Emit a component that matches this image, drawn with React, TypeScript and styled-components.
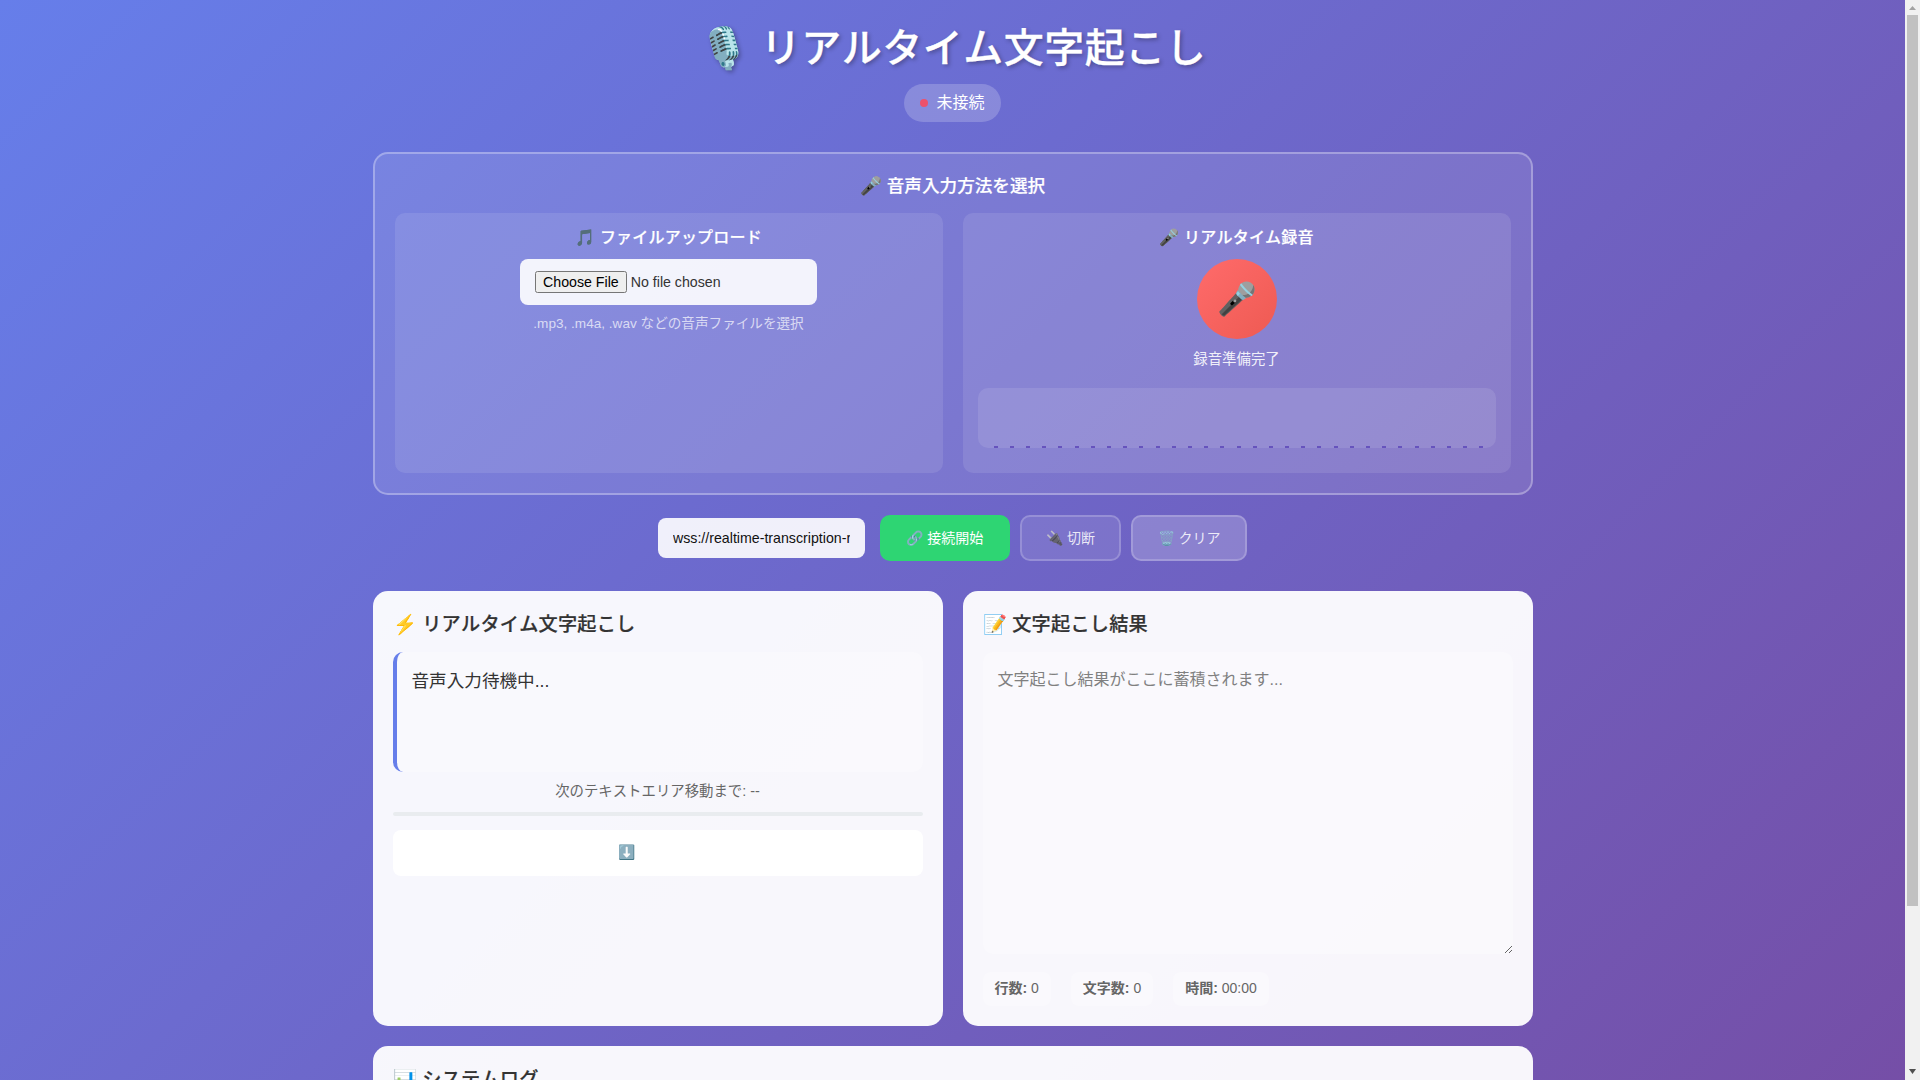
import React from "react";
import styled, { createGlobalStyle } from "styled-components";

const Global = createGlobalStyle`
  * { margin: 0; padding: 0; box-sizing: border-box; }
  body {
    font-family: "Liberation Sans", "Noto Sans CJK JP", sans-serif;
    font-kerning: none;
    line-height: 1.35;
    background: linear-gradient(135deg, #667eea 0%, #764ba2 100%);
    min-height: 100vh;
    padding-right: 15px;
    color: #333;
  }
`;

const ScrollRail = styled.div`
  position: fixed;
  top: 0;
  right: 0;
  width: 15px;
  height: 100vh;
  background: #f1f1f1;
  display: flex;
  flex-direction: column;
  z-index: 10;
`;

const ScrollArrow = styled.svg`
  display: block;
  flex: none;
  width: 15px;
  height: 15px;
`;

const ScrollTrack = styled.div`
  flex: 1;
  padding: 0 2px;
`;

const ScrollThumb = styled.div`
  height: 891px;
  background: #c1c1c1;
`;

const Container = styled.div`
  max-width: 1200px;
  margin: 0 auto;
  padding: 20px;
`;

const Header = styled.header`
  text-align: center;
  margin-bottom: 30px;
`;

const Title = styled.h1`
  font-size: 40px;
  font-weight: 500;
  line-height: 56px;
  letter-spacing: 0.5px;
  color: #fff;
  margin-bottom: 8px;
  -webkit-text-stroke: 0.3px #fff;
  text-shadow: 2px 2px 4px rgba(0, 0, 0, 0.3);
`;

const Status = styled.div`
  display: inline-flex;
  align-items: center;
  padding: 8px 16px;
  border-radius: 20px;
  background: rgba(255, 255, 255, 0.2);
  color: #fff;
  font-size: 16px;
`;

const Dot = styled.span`
  width: 8px;
  height: 8px;
  border-radius: 50%;
  background: #ff4757;
  opacity: 0.85;
  margin-right: 8px;
`;

const InputPanel = styled.section`
  background: rgba(255, 255, 255, 0.1);
  border: 2px solid rgba(255, 255, 255, 0.3);
  border-radius: 15px;
  padding: 20px;
  margin-bottom: 20px;
`;

const PanelTitle = styled.h3`
  color: #fff;
  font-size: 17.6px;
  font-weight: 500;
  line-height: 25.76px;
  -webkit-text-stroke: 0.2px #fff;
  text-align: center;
  margin-bottom: 14px;
`;

const MethodGrid = styled.div`
  display: grid;
  grid-template-columns: 1fr 1fr;
  gap: 20px;
`;

const Method = styled.div`
  background: rgba(255, 255, 255, 0.1);
  border-radius: 10px;
  padding: 14px 15px 15px;
  text-align: center;
  display: flex;
  flex-direction: column;
  align-items: center;
`;

const MethodTitle = styled.h4`
  color: #fff;
  font-size: 16px;
  font-weight: 500;
  letter-spacing: 0.2px;
  -webkit-text-stroke: 0.2px #fff;
  margin-bottom: 10px;
`;

const FileInput = styled.input`
  background: rgba(255, 255, 255, 0.9);
  border: none;
  border-radius: 8px;
  padding: 12px 15px;
  width: 297px;
  font-size: 14.2px;
  font-family: inherit;
  color: #333;
`;

const Hint = styled.p`
  color: rgba(255, 255, 255, 0.7);
  font-size: 13.6px;
  margin-top: 10px;
`;

const RecordButton = styled.button`
  width: 80px;
  height: 80px;
  border: none;
  border-radius: 50%;
  background: linear-gradient(135deg, #ff6b6b, #ee5a52);
  font-size: 32px;
  font-family: inherit;
`;

const RecordStatus = styled.div`
  color: rgba(255, 255, 255, 0.9);
  font-size: 14.4px;
  margin-top: 11px;
`;

const Visualizer = styled.div`
  width: 100%;
  height: 60px;
  margin: 19px 0 10px;
  border-radius: 10px;
  overflow: hidden;
  background: rgba(255, 255, 255, 0.1);
  display: flex;
  align-items: flex-end;
  gap: 12.2px;
`;

const Bar = styled.span`
  width: 4px;
  height: 2px;
  flex: none;
  background: #6653bd;
`;

const Controls = styled.div`
  display: flex;
  justify-content: center;
  align-items: center;
  gap: 10px;
  margin-bottom: 30px;
`;

const UrlInput = styled.input`
  width: 207px;
  padding: 12px 15px;
  margin-right: 5px;
  border: none;
  border-radius: 8px;
  background: rgba(255, 255, 255, 0.9);
  color: #111;
  font-size: 14.2px;
  font-family: inherit;
`;

const Button = styled.button<{ $variant: "primary" | "muted" | "soft" }>`
  height: 46px;
  padding: 0 24.4px 3px;
  border-radius: 10px;
  font-size: 14px;
  font-family: inherit;
  color: ${(p) => (p.$variant === "primary" ? "#fff" : "rgba(255,255,255,0.85)")};
  border: 2px solid
    ${(p) => (p.$variant === "primary" ? "#2ed573" : "rgba(255,255,255,0.2)")};
  background: ${(p) =>
    p.$variant === "primary"
      ? "#2ed573"
      : p.$variant === "soft"
        ? "rgba(255,255,255,0.2)"
        : "rgba(255,255,255,0.1)"};
`;

const CardGrid = styled.div`
  display: grid;
  grid-template-columns: 1fr 1fr;
  gap: 20px;
  margin-bottom: 20px;
`;

const Card = styled.section`
  background: rgba(255, 255, 255, 0.95);
  border-radius: 15px;
  padding: 20px;
`;

const CardTitle = styled.h2`
  color: #333;
  font-size: 19.2px;
  font-weight: 500;
  line-height: 28px;
  letter-spacing: 0.2px;
  -webkit-text-stroke: 0.2px #333;
  margin-bottom: 13px;
`;

const LiveBox = styled.div`
  height: 120px;
  padding: 15px;
  border-left: 4px solid #667eea;
  border-radius: 10px;
  background: rgba(255, 255, 255, 0.3);
  color: #333;
  font-size: 17.6px;
  line-height: 1.6;
`;

const Timer = styled.div`
  margin-top: 10px;
  text-align: center;
  color: #666;
  font-size: 14.4px;
`;

const Progress = styled.div`
  height: 4px;
  margin-top: 10px;
  border-radius: 2px;
  background: #e9ecef;
`;

const DownloadRow = styled.div`
  height: 46px;
  margin-top: 14px;
  padding-right: 62px;
  border-radius: 8px;
  background: #fff;
  display: flex;
  align-items: center;
  justify-content: center;
  font-size: 14px;
`;

const ResultArea = styled.textarea`
  display: block;
  width: 100%;
  height: 302px;
  padding: 15px;
  border: none;
  border-radius: 10px;
  background: rgba(255, 255, 255, 0.3);
  font-size: 16px;
  font-family: inherit;
  line-height: 1.6;
  color: #333;

  &::placeholder {
    color: #808080;
  }
`;

const Stats = styled.div`
  display: flex;
  gap: 20px;
  margin-top: 18px;
`;

const Stat = styled.div`
  padding: 7px 12px 8px;
  border-radius: 8px;
  background: rgba(255, 255, 255, 0.3);
  color: #666;
  font-size: 14px;
`;

const LogBox = styled.div`
  height: 125px;
  padding: 15px;
  border-radius: 10px;
  background: rgba(255, 255, 255, 0.3);
`;

export default function App() {
  return (
    <>
      <Global />
      <Container>
        <Header>
          <Title>🎙️ リアルタイム文字起こし</Title>
          <Status>
            <Dot />
            未接続
          </Status>
        </Header>

        <InputPanel>
          <PanelTitle>🎤 音声入力方法を選択</PanelTitle>
          <MethodGrid>
            <Method>
              <MethodTitle>🎵 ファイルアップロード</MethodTitle>
              <FileInput type="file" />
              <Hint>.mp3, .m4a, .wav などの音声ファイルを選択</Hint>
            </Method>
            <Method>
              <MethodTitle>🎤 リアルタイム録音</MethodTitle>
              <RecordButton>🎤</RecordButton>
              <RecordStatus>録音準備完了</RecordStatus>
              <Visualizer>
                {Array.from({ length: 32 }, (_, i) => (
                  <Bar key={i} />
                ))}
              </Visualizer>
            </Method>
          </MethodGrid>
        </InputPanel>

        <Controls>
          <UrlInput defaultValue="wss://realtime-transcription-relay.onrender.com" />
          <Button $variant="primary">🔗 接続開始</Button>
          <Button $variant="muted">🔌 切断</Button>
          <Button $variant="soft">🗑️ クリア</Button>
        </Controls>

        <CardGrid>
          <Card>
            <CardTitle>⚡ リアルタイム文字起こし</CardTitle>
            <LiveBox>音声入力待機中...</LiveBox>
            <Timer>次のテキストエリア移動まで: --</Timer>
            <Progress />
            <DownloadRow>⬇️</DownloadRow>
          </Card>
          <Card>
            <CardTitle>📝 文字起こし結果</CardTitle>
            <ResultArea placeholder="文字起こし結果がここに蓄積されます..." />
            <Stats>
              <Stat>
                <strong>行数:</strong> 0
              </Stat>
              <Stat>
                <strong>文字数:</strong> 0
              </Stat>
              <Stat>
                <strong>時間:</strong> 00:00
              </Stat>
            </Stats>
          </Card>
        </CardGrid>

        <Card>
          <CardTitle>📊 システムログ</CardTitle>
          <LogBox />
        </Card>
      </Container>

      <ScrollRail>
        <ScrollArrow viewBox="0 0 15 15">
          <path d="M4 10 L7.5 6 L11 10 Z" fill="#a3a3a3" />
        </ScrollArrow>
        <ScrollTrack>
          <ScrollThumb />
        </ScrollTrack>
        <ScrollArrow viewBox="0 0 15 15">
          <path d="M4 4 L11 4 L7.5 9 Z" fill="#505050" />
        </ScrollArrow>
      </ScrollRail>
    </>
  );
}
